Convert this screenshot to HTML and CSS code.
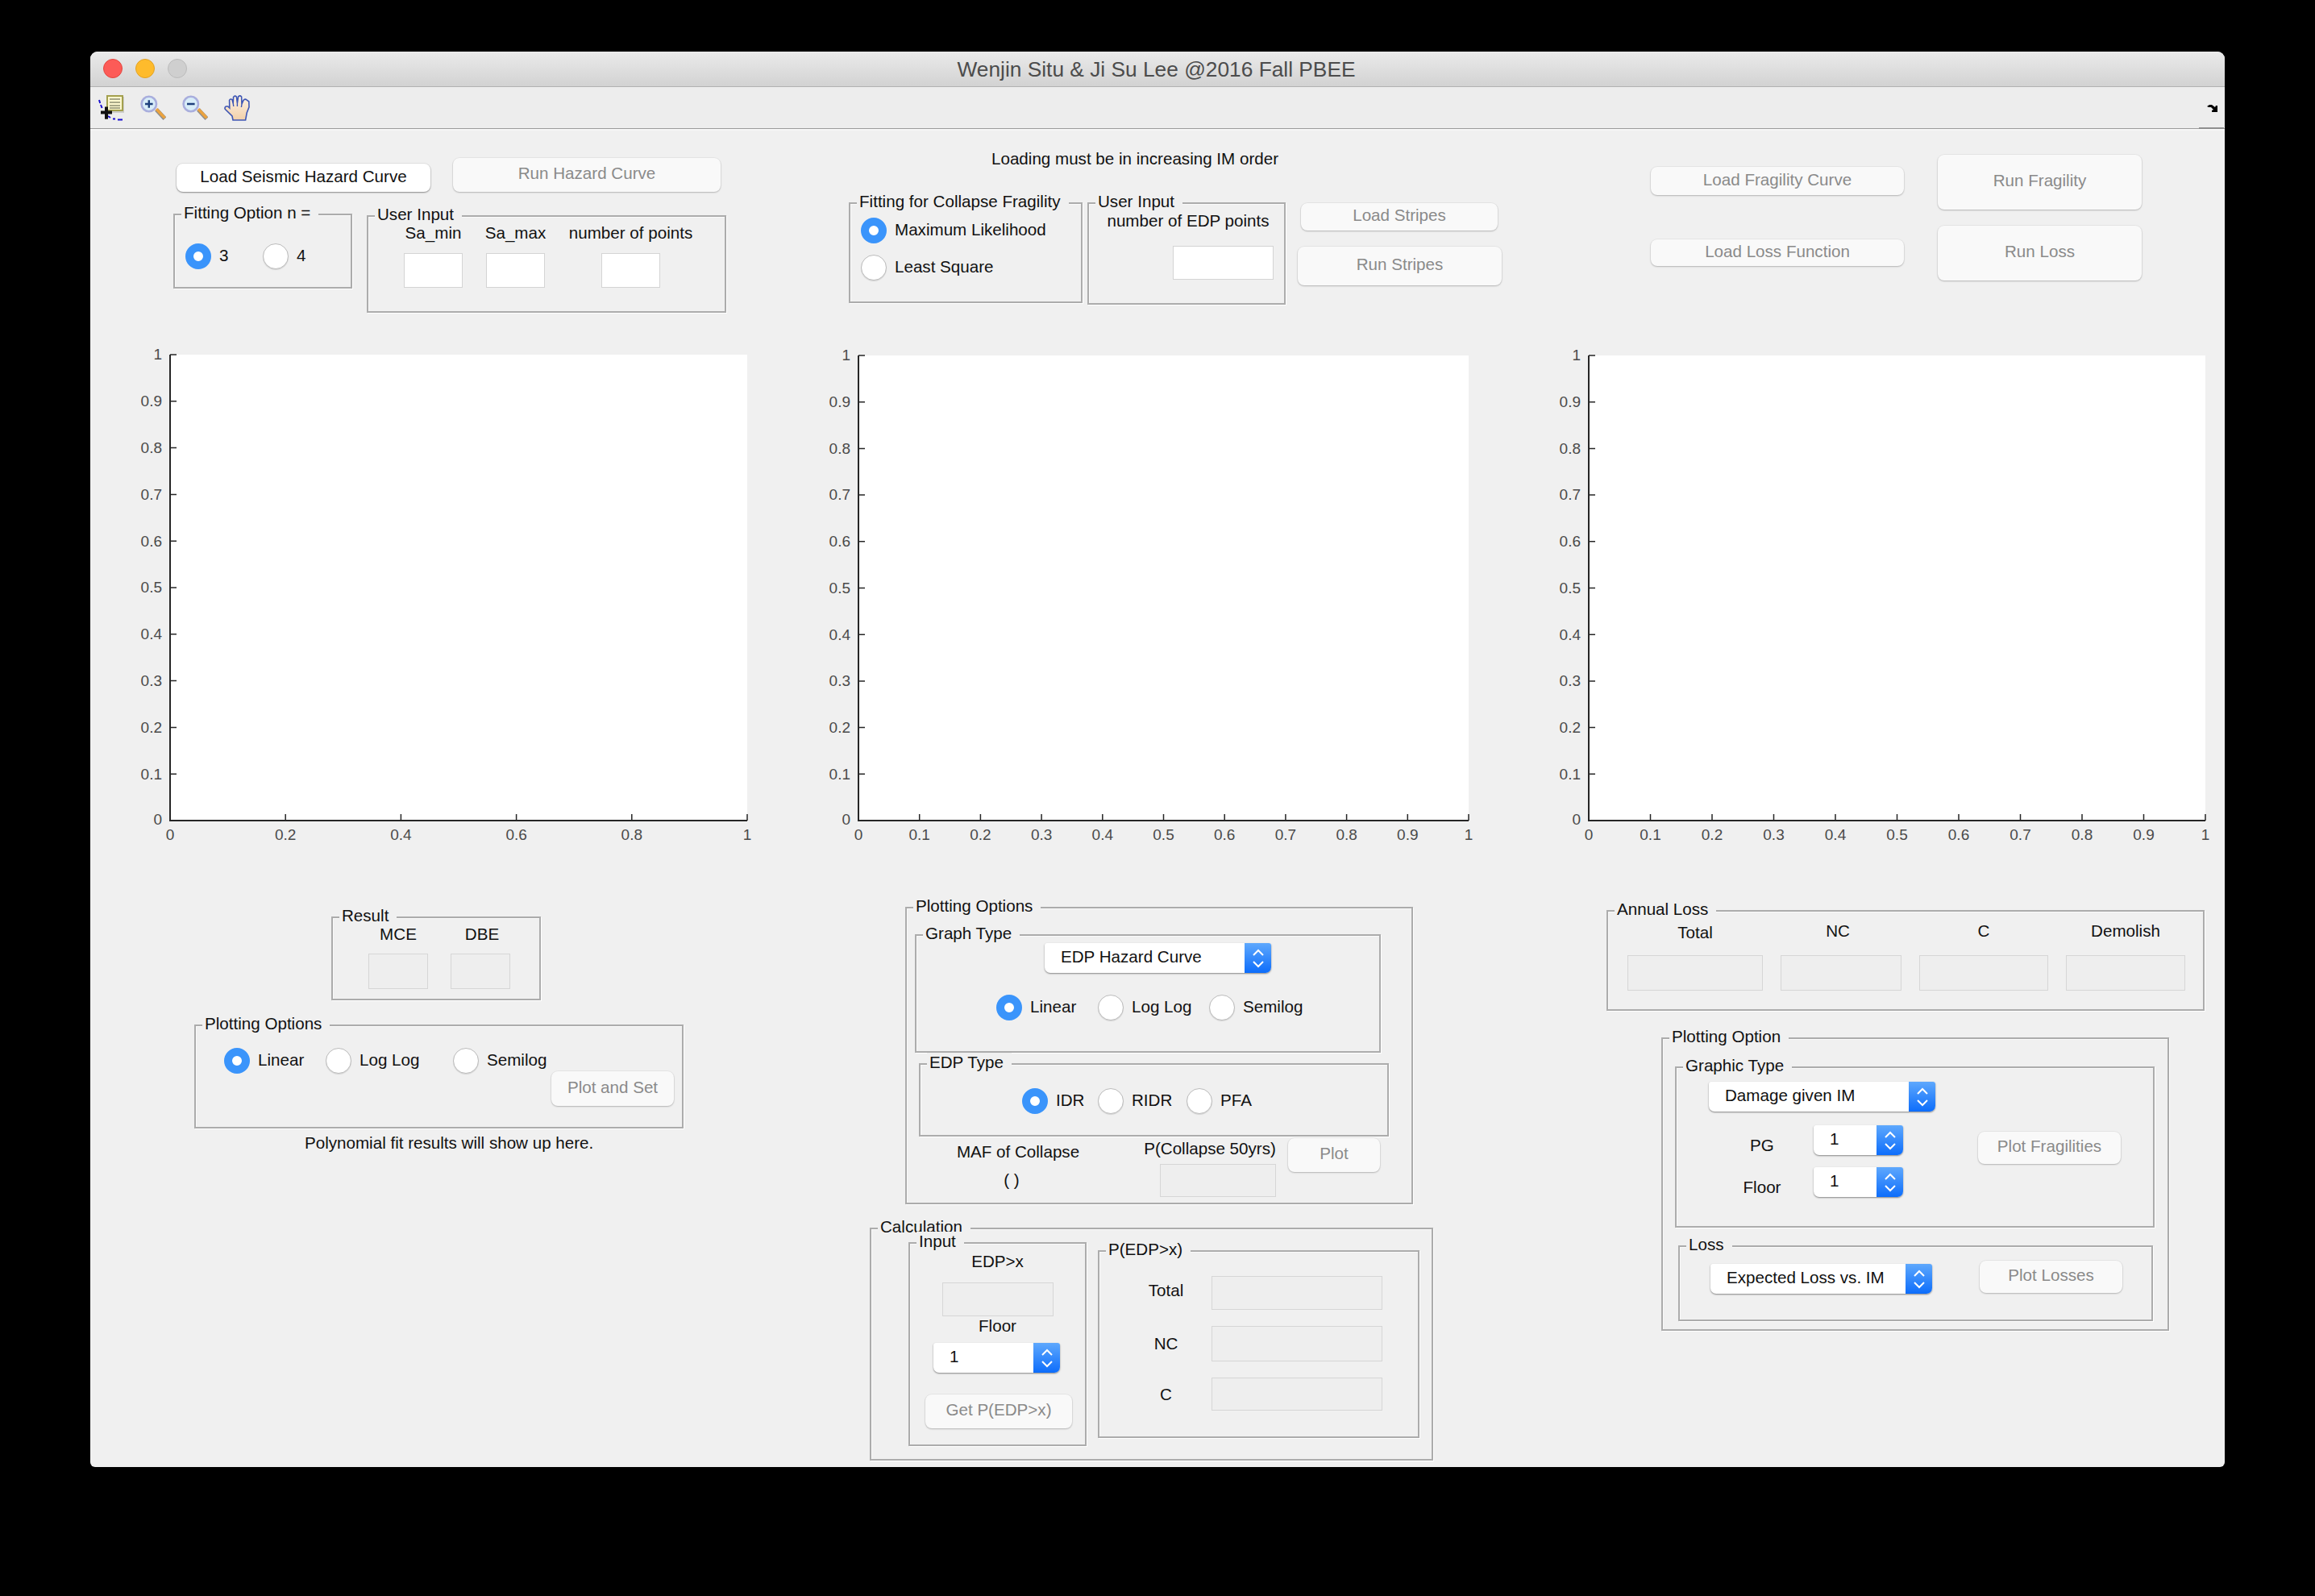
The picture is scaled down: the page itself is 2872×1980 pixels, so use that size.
FILE: index.html
```html
<!DOCTYPE html>
<html lang="en">
<head>
  <meta charset="UTF-8">
  <title>Wenjin Situ &amp; Ji Su Lee @2016 Fall PBEE</title>
  <link rel="stylesheet" href="styles.css">
</head>
<body>
  <svg class="defs">
    <symbol id="updown" viewBox="0 0 16 24"><path d="M2 8 8 2l6 6M2 16l6 6 6-6"/></symbol>
  </svg>

  <div class="window">
    <div class="titlebar">
      <div class="lights"><i class="light red"></i><i class="light yellow"></i><i class="light gray"></i></div>
      <div class="title">Wenjin Situ &amp; Ji Su Lee @2016 Fall PBEE</div>
    </div>

    <div class="toolbar">
      <svg class="tool" viewBox="0 0 16 16">
        <rect x="6" y="1" width="10" height="10" fill="#8f8f8f" opacity=".35"/>
        <rect x="5.500" y=".5" width="9.500" height="9" fill="#fdf8cf" stroke="#a3a04e"/>
        <path d="M7 2.500h6.500M7 4.500h6.500M7 6.500h6.500M7 8h6.500" stroke="#a8a888"/>
        <path d="M.5 3l.6 2M1.500 6l.8 2M6 13l1.500 1M9 14.800h1.500M12 15.200h3" stroke="#1a0fd0" fill="none"/>
        <path d="M1.500 10.800h7M5 7.300v7.600" stroke="#111" stroke-width="2" fill="none"/>
      </svg>
      <svg class="tool" viewBox="0 0 16 16">
        <path d="M10 9l5.200 5.600" stroke="#8c8c8c" stroke-width="2.600"/>
        <path d="M10 8.600l5.200 5.600" stroke="#eba33f" stroke-width="1.800"/>
        <circle cx="5.400" cy="5.500" r="4.600" fill="#d8edf8" stroke="#a9aedd" stroke-width="1.300"/>
        <path d="M3 5.500h4.800M5.400 3.100v4.800" stroke="#1d3f7c" stroke-width="1.200"/>
      </svg>
      <svg class="tool" viewBox="0 0 16 16">
        <path d="M10 9l5.200 5.600" stroke="#8c8c8c" stroke-width="2.600"/>
        <path d="M10 8.600l5.200 5.600" stroke="#eba33f" stroke-width="1.800"/>
        <circle cx="5.400" cy="5.500" r="4.600" fill="#d8edf8" stroke="#a9aedd" stroke-width="1.300"/>
        <path d="M3 5.500h4.800" stroke="#1d3f7c" stroke-width="1.200"/>
      </svg>
      <svg class="tool" viewBox="0 0 16 16">
        <defs>
          <linearGradient id="palm" x1="0" y1="0" x2="0" y2="1">
            <stop offset="0" stop-color="#fdf3e6"/>
            <stop offset="1" stop-color="#f2cfa8"/>
          </linearGradient>
        </defs>
        <path d="M5.500 15.500 5 13 .7 8.800Q.1 7.600 1.200 7h1.200l1 1L3.300 3.200Q4 2 5 2.800L5.600 5 5.800 1.200Q6.700 0 7.700 1L8.200 5 8.800.9Q9.900 0 10.800 1L11 5.500 12 3.200Q13 2 14 3l1.400 1 .1 3.400-1.400 3.600-.8 4.500z" fill="url(#palm)" stroke="#3f57b5" stroke-width=".8"/>
        <path d="M5.600 5 5.900 7M8.200 5v2M11 5.500 10.700 7.500" stroke="#3f57b5" stroke-width=".7" fill="none"/>
      </svg>
      <svg class="dock" viewBox="0 0 14 10">
        <path d="M0 2 3 0h3l4 3 1-2h2v8H6V7l2-1-3-3H3L2 3z"/>
      </svg>
      <i class="toolbar-end"></i>
    </div>

    <div class="content">

      <!-- hazard curve controls -->
      <section class="cell">
        <div class="hazard-buttons">
          <button class="btn btn-on hazard-load">Load Seismic Hazard Curve</button>
          <button class="btn hazard-run" disabled>Run Hazard Curve</button>
        </div>
        <div class="hazard-panels">
          <div class="panel fit-option">
            <span class="legend">Fitting Option n =</span>
            <div class="fit-radios">
              <label class="opt"><input type="radio" name="fit" checked>3</label>
              <label class="opt"><input type="radio" name="fit">4</label>
            </div>
          </div>
          <div class="panel hazard-input">
            <span class="legend">User Input</span>
            <div class="hazard-fields">
              <div class="field"><span class="cap">Sa_min</span><input class="edit" type="text"></div>
              <div class="field"><span class="cap">Sa_max</span><input class="edit" type="text"></div>
              <div class="field"><span class="cap">number of points</span><input class="edit" type="text"></div>
            </div>
          </div>
        </div>
      </section>

      <!-- stripes controls -->
      <section class="cell">
        <p class="note load-note">Loading must be in increasing IM order</p>
        <div class="stripe-row">
          <div class="panel collapse-fit">
            <span class="legend">Fitting for Collapse Fragility</span>
            <div class="collapse-radios">
              <label class="opt"><input type="radio" name="collapse" checked>Maximum Likelihood</label>
              <label class="opt"><input type="radio" name="collapse">Least Square</label>
            </div>
          </div>
          <div class="panel stripe-input">
            <span class="legend">User Input</span>
            <p class="note stripe-cap">number of EDP points</p>
            <input class="edit stripe-edit" type="text">
          </div>
          <div class="stripe-buttons">
            <button class="btn stripe-load" disabled>Load Stripes</button>
            <button class="btn stripe-run" disabled>Run Stripes</button>
          </div>
        </div>
      </section>

      <!-- fragility and loss controls -->
      <section class="cell">
        <div class="frag-grid">
          <button class="btn frag-load" disabled>Load Fragility Curve</button>
          <button class="btn frag-run" disabled>Run Fragility</button>
          <button class="btn loss-load" disabled>Load Loss Function</button>
          <button class="btn frag-run" disabled>Run Loss</button>
        </div>
      </section>

      <!-- the three empty axes -->
      <section class="cell">
        <svg class="plot">
          <rect class="plot-bg" x="99" y="20" width="716" height="578"/>
          <path class="axis" d="M99 20V598H815"/>
          <path class="ticks" d="M99 20h8M99 77.800h8M99 135.600h8M99 193.400h8M99 251.200h8M99 309h8M99 366.800h8M99 424.600h8M99 482.400h8M99 540.200h8M242.200 598v-8M385.400 598v-8M528.600 598v-8M671.800 598v-8M815 598v-8"/>
          <g class="ylab">
            <text x="89" y="26">1</text><text x="89" y="84">0.9</text><text x="89" y="142">0.8</text><text x="89" y="200">0.7</text><text x="89" y="258">0.6</text><text x="89" y="315">0.5</text><text x="89" y="373">0.4</text><text x="89" y="431">0.3</text><text x="89" y="489">0.2</text><text x="89" y="547">0.1</text><text x="89" y="603">0</text>
          </g>
          <g class="xlab">
            <text x="99" y="622">0</text><text x="242.200" y="622">0.2</text><text x="385.400" y="622">0.4</text><text x="528.600" y="622">0.6</text><text x="671.800" y="622">0.8</text><text x="815" y="622">1</text>
          </g>
        </svg>
      </section>

      <section class="cell">
        <svg class="plot">
          <rect class="plot-bg" x="45" y="21" width="757" height="577"/>
          <path class="axis" d="M45 21V598H802"/>
          <path class="ticks" d="M45 21h8M45 78.700h8M45 136.400h8M45 194.100h8M45 251.800h8M45 309.500h8M45 367.200h8M45 424.900h8M45 482.600h8M45 540.300h8M120.700 598v-8M196.400 598v-8M272.100 598v-8M347.800 598v-8M423.500 598v-8M499.200 598v-8M574.900 598v-8M650.600 598v-8M726.300 598v-8M802 598v-8"/>
          <g class="ylab">
            <text x="35" y="27">1</text><text x="35" y="85">0.9</text><text x="35" y="143">0.8</text><text x="35" y="200">0.7</text><text x="35" y="258">0.6</text><text x="35" y="316">0.5</text><text x="35" y="374">0.4</text><text x="35" y="431">0.3</text><text x="35" y="489">0.2</text><text x="35" y="547">0.1</text><text x="35" y="603">0</text>
          </g>
          <g class="xlab">
            <text x="45" y="622">0</text><text x="120.700" y="622">0.1</text><text x="196.400" y="622">0.2</text><text x="272.100" y="622">0.3</text><text x="347.800" y="622">0.4</text><text x="423.500" y="622">0.5</text><text x="499.200" y="622">0.6</text><text x="574.900" y="622">0.7</text><text x="650.600" y="622">0.8</text><text x="726.300" y="622">0.9</text><text x="802" y="622">1</text>
          </g>
        </svg>
      </section>

      <section class="cell">
        <svg class="plot">
          <rect class="plot-bg" x="51" y="21" width="765" height="577"/>
          <path class="axis" d="M51 21V598H816"/>
          <path class="ticks" d="M51 21h8M51 78.700h8M51 136.400h8M51 194.100h8M51 251.800h8M51 309.500h8M51 367.200h8M51 424.900h8M51 482.600h8M51 540.300h8M127.500 598v-8M204 598v-8M280.500 598v-8M357 598v-8M433.500 598v-8M510 598v-8M586.500 598v-8M663 598v-8M739.500 598v-8M816 598v-8"/>
          <g class="ylab">
            <text x="41" y="27">1</text><text x="41" y="85">0.9</text><text x="41" y="143">0.8</text><text x="41" y="200">0.7</text><text x="41" y="258">0.6</text><text x="41" y="316">0.5</text><text x="41" y="374">0.4</text><text x="41" y="431">0.3</text><text x="41" y="489">0.2</text><text x="41" y="547">0.1</text><text x="41" y="603">0</text>
          </g>
          <g class="xlab">
            <text x="51" y="622">0</text><text x="127.500" y="622">0.1</text><text x="204" y="622">0.2</text><text x="280.500" y="622">0.3</text><text x="357" y="622">0.4</text><text x="433.500" y="622">0.5</text><text x="510" y="622">0.6</text><text x="586.500" y="622">0.7</text><text x="663" y="622">0.8</text><text x="739.500" y="622">0.9</text><text x="816" y="622">1</text>
          </g>
        </svg>
      </section>

      <!-- hazard results -->
      <section class="cell">
        <div class="panel result">
          <span class="legend">Result</span>
          <div class="result-fields">
            <div class="field"><span class="cap">MCE</span><input class="edit off" type="text" disabled></div>
            <div class="field"><span class="cap dbe-cap">DBE</span><input class="edit off" type="text" disabled></div>
          </div>
        </div>
        <div class="panel hazard-plot">
          <span class="legend">Plotting Options</span>
          <div class="hazard-radios">
            <label class="opt"><input type="radio" name="hscale" checked>Linear</label>
            <label class="opt"><input type="radio" name="hscale">Log Log</label>
            <label class="opt"><input type="radio" name="hscale">Semilog</label>
          </div>
          <button class="btn plot-set" disabled>Plot and Set</button>
        </div>
        <p class="note poly-note">Polynomial fit results will show up here.</p>
      </section>

      <!-- EDP plotting and calculation -->
      <section class="cell">
        <div class="panel edp-plot">
          <span class="legend">Plotting Options</span>
          <div class="panel graph-type">
            <span class="legend">Graph Type</span>
            <div class="popup graph-popup">
              <span class="popup-text">EDP Hazard Curve</span>
              <span class="popup-arrow"><svg><use href="#updown"/></svg></span>
            </div>
            <div class="graph-radios">
              <label class="opt"><input type="radio" name="gscale" checked>Linear</label>
              <label class="opt"><input type="radio" name="gscale">Log Log</label>
              <label class="opt"><input type="radio" name="gscale">Semilog</label>
            </div>
          </div>
          <div class="panel edp-type">
            <span class="legend">EDP Type</span>
            <div class="edp-radios">
              <label class="opt"><input type="radio" name="edp" checked>IDR</label>
              <label class="opt"><input type="radio" name="edp">RIDR</label>
              <label class="opt"><input type="radio" name="edp">PFA</label>
            </div>
          </div>
          <div class="maf-row">
            <div class="maf">
              <div class="maf-cap">MAF of Collapse</div>
              <div class="maf-value">( )</div>
            </div>
            <div class="pcollapse">
              <div class="pcollapse-cap"><span>P(Collapse 50yrs)</span></div>
              <input class="edit off pcollapse-edit" type="text" disabled>
            </div>
            <button class="btn plot-edp" disabled>Plot</button>
          </div>
        </div>

        <div class="panel calc">
          <span class="legend">Calculation</span>
          <div class="calc-row">
            <div class="panel calc-input">
              <span class="legend">Input</span>
              <div class="calc-cap edp-cap">EDP&gt;x</div>
              <input class="edit off calc-edit" type="text" disabled>
              <div class="calc-cap">Floor</div>
              <div class="popup calc-popup">
                <span class="popup-text">1</span>
                <span class="popup-arrow"><svg><use href="#updown"/></svg></span>
              </div>
              <button class="btn calc-get" disabled>Get P(EDP&gt;x)</button>
            </div>
            <div class="panel calc-output">
              <span class="legend">P(EDP&gt;x)</span>
              <div class="output-grid">
                <span class="cap total-cap">Total</span>
                <input class="edit off output-a" type="text" disabled>
                <span class="cap">NC</span>
                <input class="edit off output-b" type="text" disabled>
                <span class="cap">C</span>
                <input class="edit off output-c" type="text" disabled>
              </div>
            </div>
          </div>
        </div>
      </section>

      <!-- loss results and plotting -->
      <section class="cell">
        <div class="panel annual">
          <span class="legend">Annual Loss</span>
          <div class="annual-grid">
            <span class="cap annual-total">Total</span>
            <span class="cap annual-nc">NC</span>
            <span class="cap">C</span>
            <span class="cap">Demolish</span>
            <input class="edit off annual-edit" type="text" disabled>
            <input class="edit off annual-edit" type="text" disabled>
            <input class="edit off annual-edit" type="text" disabled>
            <input class="edit off annual-edit" type="text" disabled>
          </div>
        </div>
        <div class="panel loss-plot">
          <span class="legend">Plotting Option</span>
          <div class="panel graphic-type">
            <span class="legend">Graphic Type</span>
            <div class="popup graphic-popup">
              <span class="popup-text">Damage given IM</span>
              <span class="popup-arrow"><svg><use href="#updown"/></svg></span>
            </div>
            <div class="graphic-row">
              <div class="pg-grid">
                <span class="cap">PG</span>
                <div class="popup small-popup">
                  <span class="popup-text">1</span>
                  <span class="popup-arrow"><svg><use href="#updown"/></svg></span>
                </div>
                <span class="cap">Floor</span>
                <div class="popup small-popup">
                  <span class="popup-text">1</span>
                  <span class="popup-arrow"><svg><use href="#updown"/></svg></span>
                </div>
              </div>
              <button class="btn plot-frag" disabled>Plot Fragilities</button>
            </div>
          </div>
          <div class="panel loss-panel">
            <span class="legend">Loss</span>
            <div class="popup loss-popup">
              <span class="popup-text">Expected Loss vs. IM</span>
              <span class="popup-arrow"><svg><use href="#updown"/></svg></span>
            </div>
            <button class="btn plot-loss" disabled>Plot Losses</button>
          </div>
        </div>
      </section>
    </div>
  </div>
</body>
</html>
```

FILE: styles.css
```css
* {
  box-sizing: border-box;
}
body {
  margin: 0;
  padding: 64px 0 0 112px;
  height: 1980px;
  overflow: hidden;
  background: #000;
  font-family: "Liberation Sans", Arial, sans-serif;
  font-size: 20.6px;
  line-height: 24px;
  color: #111;
}
p {
  margin: 0;
}
.defs {
  display: none;
}

/* window chrome */
.window {
  width: 2648px;
  height: 1756px;
  background: #f0f0f0;
  border-radius: 9px 9px 6px 6px;
  overflow: hidden;
}
.titlebar {
  height: 44px;
  display: flex;
  align-items: center;
  position: relative;
  background: linear-gradient(#ebebeb, #d2d2d2);
  border-bottom: 1px solid #b1b1b1;
}
.lights {
  display: flex;
  gap: 16px;
  padding: 0 0 1px 16px;
}
.light {
  width: 24px;
  height: 24px;
  border-radius: 50%;
  border: 1px solid;
}
.red {
  background: #fc5b57;
  border-color: #e2463f;
}
.yellow {
  background: #febb2c;
  border-color: #e1a125;
}
.gray {
  background: #cfcfcf;
  border-color: #bbb;
}
.title {
  position: absolute;
  left: 0;
  right: 3px;
  text-align: center;
  font-size: 26.3px;
  color: #4c4c4c;
}
.toolbar {
  height: 54px;
  display: flex;
  align-items: flex-start;
  gap: 20px;
  padding: 10px 0 0 10px;
  background: #ededed;
  border-bottom: 2px solid #f7f7f7;
  box-shadow: inset 0 -1px 0 #9c9c9c;
  position: relative;
}
.tool {
  width: 32px;
  height: 32px;
}
.dock {
  position: absolute;
  right: 8px;
  top: 22px;
  width: 14px;
  height: 10px;
  fill: #000;
}
.toolbar-end {
  position: absolute;
  right: 1px;
  bottom: 0;
  width: 31px;
  height: 2px;
  background: #8e8e8e;
}

/* main layout */
.content {
  display: grid;
  grid-template-columns: 908px 900px 840px;
  grid-template-rows: 258px 680px 720px;
}
.cell {
  min-width: 0;
}

/* shared controls */
.panel {
  position: relative;
  border: 2px solid #acacac;
  box-shadow: 1px 1px 0 #fff, inset 1px 1px 0 #fafafa;
}
.legend {
  position: absolute;
  top: -15px;
  left: 8px;
  padding: 0 10px 0 3px;
  background: #f0f0f0;
  white-space: nowrap;
}
.btn {
  display: flex;
  align-items: center;
  justify-content: center;
  padding: 0 0 4px;
  border: 0;
  border-radius: 8px;
  font: inherit;
  color: #111;
  background: #fff;
  box-shadow: 0 1px 2px rgba(0, 0, 0, .4), 0 0 0 1px rgba(0, 0, 0, .05);
}
.btn:disabled {
  color: #8a8a8a;
  background: #f9f9f9;
  box-shadow: 0 1px 2px rgba(0, 0, 0, .22), 0 0 0 1px rgba(0, 0, 0, .04);
}
.opt {
  display: flex;
  align-items: center;
  gap: 10px;
  white-space: nowrap;
}
/* the negative margin sets the text 1px above the button's centre */
.opt input {
  appearance: none;
  flex: none;
  width: 32px;
  height: 32px;
  margin: 0 0 -2px;
  border-radius: 50%;
  background: #fff;
  border: 1px solid #bcbcbc;
  box-shadow: 0 1px 1px rgba(0, 0, 0, .12);
}
.opt input:checked {
  border: 10px solid #3a94fb;
  box-shadow: none;
}
.edit {
  display: block;
  width: 100%;
  height: 43px;
  margin: 0;
  padding: 0;
  background: #fff;
  border: 1px solid #d4d4d4;
}
.edit.off {
  background: #eee;
  border-color: #d6d6d6;
}
.cap {
  justify-self: center;
  white-space: nowrap;
}
.field {
  display: flex;
  flex-direction: column;
  align-items: center;
  width: 73px;
  row-gap: 13px;
}
.note {
  white-space: nowrap;
}
.popup {
  display: flex;
  height: 37px;
  background: #fff;
  border-radius: 3px 3px 7px 7px;
  box-shadow: 0 1px 2px rgba(0, 0, 0, .45);
  overflow: hidden;
}
.popup-text {
  flex: 1;
  padding: 5px 0 0 20px;
  white-space: nowrap;
}
.popup-arrow {
  flex: none;
  width: 33px;
  display: flex;
  align-items: center;
  justify-content: center;
  background: linear-gradient(#5ea8fd, #0d6dfb);
}
.popup-arrow svg {
  width: 16px;
  height: 24px;
  fill: none;
  stroke: #fff;
  stroke-width: 2;
}

/* hazard curve block */
.hazard-buttons {
  display: flex;
  align-items: flex-end;
  gap: 28px;
  padding: 34px 0 0 107px;
}
.hazard-load {
  width: 315px;
  height: 35px;
}
.hazard-run {
  width: 332px;
  height: 42px;
}
.hazard-panels {
  display: flex;
  align-items: flex-start;
  gap: 18px;
  margin: 27px 0 0 103px;
}
.fit-option {
  width: 222px;
  height: 93px;
}
.fit-radios {
  display: grid;
  grid-template-columns: 96px 1fr;
  padding: 35px 0 0 13px;
}
.hazard-input {
  width: 446px;
  height: 121px;
  margin-top: 2px;
}
.hazard-fields {
  display: flex;
  gap: 29px;
  padding: 8px 0 0 44px;
}
.hazard-fields .field:last-child {
  margin-left: 41px;
}

/* stripes block */
.load-note {
  margin: 23px 0 0 210px;
}
.stripe-row {
  display: flex;
  align-items: flex-start;
  margin: 42px 0 0 33px;
}
.collapse-fit {
  width: 290px;
  height: 125px;
}
.collapse-radios {
  display: flex;
  flex-direction: column;
  gap: 16px;
  padding: 17px 0 0 13px;
}
.stripe-input {
  width: 246px;
  height: 127px;
  margin-left: 6px;
}
.stripe-cap {
  padding: 9px 0 0 4px;
  text-align: center;
}
.stripe-edit {
  width: 125px;
  height: 42px;
  margin: 19px 0 0 104px;
}
.stripe-buttons {
  display: flex;
  flex-direction: column;
  align-items: flex-start;
  margin-left: 15px;
}
.stripe-load {
  width: 244px;
  height: 34px;
  margin: 1px 0 0 4px;
}
.stripe-run {
  width: 253px;
  height: 48px;
  margin-top: 20px;
}

/* fragility block */
.frag-grid {
  display: grid;
  grid-template-columns: 314px 253px;
  column-gap: 42px;
  row-gap: 20px;
  padding: 30px 0 0 128px;
}
.frag-run {
  height: 68px;
}
.frag-load {
  height: 35px;
  margin-top: 15px;
}
.loss-load {
  height: 33px;
  margin-top: 17px;
}

/* axes */
.plot {
  display: block;
  width: 100%;
  height: 680px;
}
.plot-bg {
  fill: #fff;
}
.axis {
  fill: none;
  stroke: #262626;
  stroke-width: 2;
}
.ticks {
  fill: none;
  stroke: #262626;
  stroke-width: 1.5;
}
.ylab text,
.xlab text {
  font-size: 19px;
  fill: #4a4a4a;
}
.ylab {
  text-anchor: end;
}
.xlab {
  text-anchor: middle;
}

/* hazard results */
.result {
  width: 260px;
  height: 104px;
  margin: 37px 0 0 299px;
}
.result-fields {
  display: flex;
  gap: 28px;
  padding: 8px 0 0 44px;
}
.result-fields .field {
  width: 74px;
  row-gap: 12px;
}
.result-fields .edit {
  height: 44px;
}
.dbe-cap {
  margin-left: 4px;
}
.hazard-plot {
  width: 607px;
  height: 129px;
  margin: 30px 0 0 129px;
}
.hazard-radios {
  display: grid;
  grid-template-columns: 126px 158px 1fr;
  padding: 27px 0 0 35px;
}
.plot-set {
  width: 152px;
  height: 43px;
  margin: -1px 0 0 441px;
}
.poly-note {
  margin: 6px 0 0 266px;
}

/* EDP plotting */
.edp-plot {
  width: 630px;
  height: 369px;
  margin: 25px 0 0 103px;
}
.graph-type {
  width: 578px;
  height: 147px;
  margin: 32px 0 0 10px;
}
.graph-popup {
  width: 281px;
  margin: 9px 0 0 159px;
}
.graph-radios {
  display: grid;
  grid-template-columns: 126px 138px 1fr;
  margin: 27px 0 0 99px;
}
.edp-type {
  width: 583px;
  height: 91px;
  margin: 13px 0 0 15px;
}
.edp-radios {
  display: grid;
  grid-template-columns: 94px 110px 1fr;
  padding: 29px 0 0 126px;
}
.maf-row {
  display: flex;
  align-items: flex-start;
  padding-left: 38px;
}
.maf {
  width: 200px;
  margin-top: 7px;
  text-align: center;
}
.maf-value {
  margin-top: 11px;
  padding-right: 16px;
}
.pcollapse {
  width: 144px;
  margin: 3px 0 0 76px;
}
.pcollapse-cap {
  width: 124px;
  display: flex;
  justify-content: center;
  white-space: nowrap;
}
.pcollapse-edit {
  height: 41px;
  margin-top: 7px;
}
.plot-edp {
  width: 114px;
  height: 42px;
  margin: 2px 0 0 15px;
}

/* calculation */
.calc {
  width: 699px;
  height: 289px;
  margin: 29px 0 0 59px;
}
.calc-row {
  display: flex;
  align-items: flex-start;
}
.calc-input {
  width: 221px;
  height: 253px;
  margin: 16px 0 0 46px;
}
.calc-cap {
  text-align: center;
}
.edp-cap {
  padding-top: 10px;
}
.calc-edit {
  width: 138px;
  height: 42px;
  margin: 14px 0 0 40px;
}
.calc-popup {
  width: 157px;
  margin: 9px 0 0 29px;
}
.calc-get {
  width: 182px;
  height: 42px;
  margin: 27px 0 0 19px;
}
.calc-output {
  width: 399px;
  height: 233px;
  margin: 26px 0 0 14px;
}
.output-grid {
  display: grid;
  grid-template-columns: 105px 212px;
  column-gap: 4px;
  align-items: center;
  row-gap: 20px;
  padding: 30px 0 0 30px;
}
.output-a {
  height: 42px;
}
.output-b {
  height: 44px;
}
.output-c {
  height: 41px;
}
.total-cap {
  margin-bottom: 6px;
}

/* loss block */
.annual {
  width: 742px;
  height: 125px;
  margin: 29px 0 0 73px;
}
.annual-grid {
  display: grid;
  grid-template-columns: 168px 150px 160px 148px;
  column-gap: 22px;
  row-gap: 16px;
  padding: 12px 0 0 24px;
}
.annual-edit {
  height: 44px;
}
.annual-total {
  margin-top: 2px;
}
.annual-nc {
  margin-right: 8px;
}
.loss-plot {
  width: 630px;
  height: 364px;
  margin: 33px 0 0 141px;
}
.graphic-type {
  width: 595px;
  height: 200px;
  margin: 34px 0 0 15px;
}
.graphic-popup {
  width: 281px;
  margin: 17px 0 0 40px;
}
.graphic-row {
  display: flex;
  align-items: flex-start;
  margin-top: 17px;
}
.pg-grid {
  display: grid;
  grid-template-columns: 100px 111px;
  column-gap: 14px;
  row-gap: 15px;
  padding-left: 56px;
}
.pg-grid .cap {
  align-self: end;
}
.small-popup {
  width: 111px;
}
.plot-frag {
  width: 177px;
  height: 40px;
  margin: 8px 0 0 93px;
}
.loss-panel {
  display: flex;
  align-items: flex-start;
  width: 589px;
  height: 94px;
  margin: 22px 0 0 19px;
}
.loss-popup {
  width: 275px;
  margin: 21px 0 0 38px;
}
.plot-loss {
  width: 177px;
  height: 40px;
  margin: 17px 0 0 59px;
}
```
